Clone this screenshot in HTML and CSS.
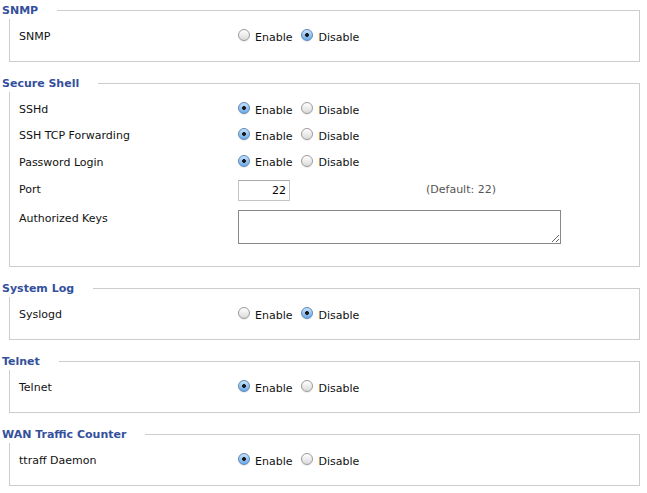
FILE: index.html
```html
<!DOCTYPE html>
<html lang="en">
<head>
    <meta charset="UTF-8">
    <title>Services</title>
    <link rel="stylesheet" href="styles.css">
</head>
<body>

    <div class="page">
        <!-- SNMP -->
        <div class="group">
            <div class="group-title">SNMP</div>
            <div class="row">
                <div class="label">SNMP</div>
                <div class="field">
                    <label class="choice"><input type="radio" name="snmp"> Enable</label>
                    <label class="choice"><input type="radio" name="snmp" checked> Disable</label>
                </div>
            </div>
        </div>

        <!-- Secure Shell -->
        <div class="group">
            <div class="group-title">Secure Shell</div>
            <div class="row">
                <div class="label">SSHd</div>
                <div class="field">
                    <label class="choice"><input type="radio" name="sshd" checked> Enable</label>
                    <label class="choice"><input type="radio" name="sshd"> Disable</label>
                </div>
            </div>
            <div class="row">
                <div class="label">SSH TCP Forwarding</div>
                <div class="field">
                    <label class="choice"><input type="radio" name="sshfwd" checked> Enable</label>
                    <label class="choice"><input type="radio" name="sshfwd"> Disable</label>
                </div>
            </div>
            <div class="row row-tall">
                <div class="label">Password Login</div>
                <div class="field">
                    <label class="choice"><input type="radio" name="sshpass" checked> Enable</label>
                    <label class="choice"><input type="radio" name="sshpass"> Disable</label>
                </div>
            </div>
            <div class="row row-port">
                <div class="label">Port</div>
                <div class="field">
                    <input type="text" class="port" value="22">
                    <span class="hint">(Default: 22)</span>
                </div>
            </div>
            <div class="row row-keys">
                <div class="label">Authorized Keys</div>
                <div class="field">
                    <textarea class="keys"></textarea>
                </div>
            </div>
        </div>

        <!-- System Log -->
        <div class="group">
            <div class="group-title">System Log</div>
            <div class="row">
                <div class="label">Syslogd</div>
                <div class="field">
                    <label class="choice"><input type="radio" name="syslogd"> Enable</label>
                    <label class="choice"><input type="radio" name="syslogd" checked> Disable</label>
                </div>
            </div>
        </div>

        <!-- Telnet -->
        <div class="group">
            <div class="group-title">Telnet</div>
            <div class="row">
                <div class="label">Telnet</div>
                <div class="field">
                    <label class="choice"><input type="radio" name="telnet" checked> Enable</label>
                    <label class="choice"><input type="radio" name="telnet"> Disable</label>
                </div>
            </div>
        </div>

        <!-- WAN Traffic Counter -->
        <div class="group">
            <div class="group-title">WAN Traffic Counter</div>
            <div class="row">
                <div class="label">ttraff Daemon</div>
                <div class="field">
                    <label class="choice"><input type="radio" name="ttraff" checked> Enable</label>
                    <label class="choice"><input type="radio" name="ttraff"> Disable</label>
                </div>
            </div>
        </div>
    </div>

</body>
</html>
```

FILE: styles.css
```css
/* General Styles */
body {
    font-family: "DejaVu Sans", Verdana, sans-serif;
    font-size: 11px;
    color: #111;
    background-color: #fff;
    margin: 0;
    padding: 0;
}

.page {
    padding: 10px 7px 0 9px;
}

/* Group boxes */
.group {
    position: relative;
    border: 1px solid #ccc;
    padding: 12px 0;
    margin-bottom: 21px;
}

.group-title {
    position: absolute;
    top: -8px;
    left: -8px;
    padding-right: 19px;
    background-color: #fff;
    color: #34509c;
    font-weight: bold;
    line-height: 16px;
}

/* Rows */
.row {
    box-sizing: border-box;
    display: flex;
    align-items: center;
    height: 26px;
    padding-top: 2px;
}

.row-tall {
    height: 27px;
}

.row-port {
    height: 29px;
    padding-top: 0;
}

.row-keys {
    height: auto;
    padding-top: 0;
    align-items: flex-start;
}

.label {
    width: 219px;
    padding-left: 9px;
    line-height: 26px;
}

.row-keys .label {
    padding-top: 2px;
}

.field {
    display: flex;
    align-items: center;
}

/* Radios */
.choice {
    display: inline-flex;
    align-items: center;
    margin-right: 9px;
}

.choice input {
    -webkit-appearance: none;
    appearance: none;
    position: relative;
    top: -2px;
    width: 12px;
    height: 12px;
    margin: 0 5px 0 0;
    border: 1px solid #9a9a9a;
    border-radius: 50%;
    background: linear-gradient(#ffffff, #dadada);
    box-shadow: 0 1px 1px rgba(0, 0, 0, 0.08);
}

.choice input:checked {
    border-color: #5f86b4;
    background: radial-gradient(circle, #1c1c1c 0 1.6px, transparent 2.2px),
                linear-gradient(#c4e2fb, #6aaaea);
}

/* Inputs */
.port {
    box-sizing: border-box;
    width: 52px;
    height: 21px;
    padding: 0 3px;
    margin: 1px 0 0;
    border: 1px solid #c4c4c4;
    border-top-color: #aaa;
    font-family: inherit;
    font-size: 11px;
    color: #000;
    text-align: right;
}

.hint {
    margin-left: 136px;
    color: #555;
}

.keys {
    box-sizing: border-box;
    width: 323px;
    height: 34px;
    margin: 6px 0 10px;
    border: 1px solid #888;
    font-family: inherit;
    font-size: 11px;
}
```
